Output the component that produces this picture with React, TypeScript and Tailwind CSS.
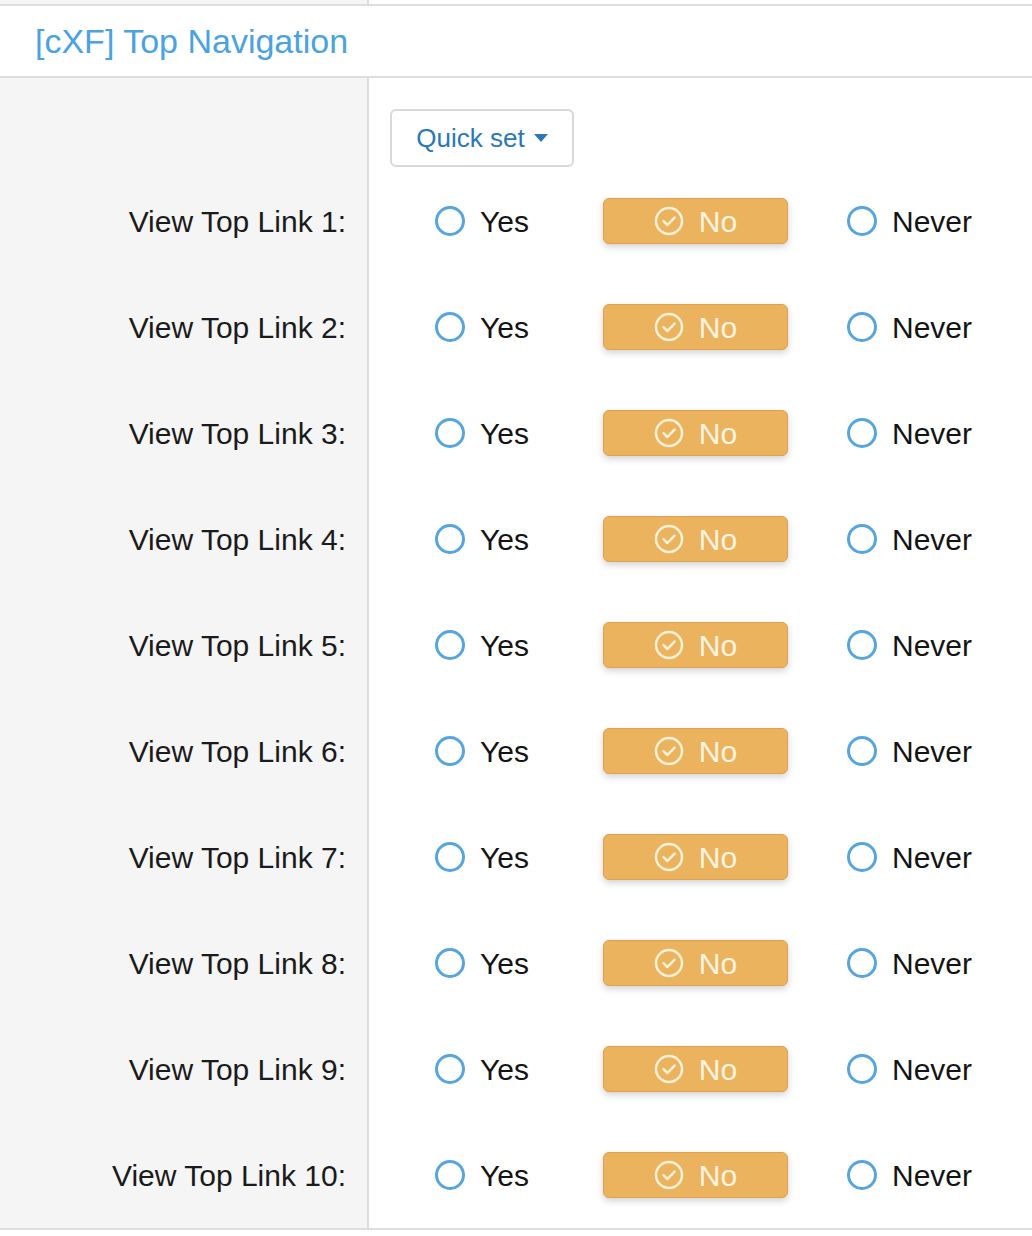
const rows = Array.from({ length: 10 }, (_, i) => `View Top Link ${i + 1}:`);

function Radio() {
	return (
		<span className="box-border block size-[30px] shrink-0 rounded-full border-[3px] border-[#56a5dd] bg-white" />
	);
}

function CheckCircle() {
	return (
		<svg width="30" height="30" viewBox="0 0 30 30" fill="none" className="shrink-0">
			<circle cx="15" cy="15" r="13" stroke="#fdf1d8" strokeWidth="2.5" />
			<path
				d="M9.5 15.2 L13.4 19 L20.6 11.6"
				stroke="#fdf1d8"
				strokeWidth="2.5"
				strokeLinecap="round"
				strokeLinejoin="round"
			/>
		</svg>
	);
}

function OptionRow({ label }: { label: string }) {
	return (
		<div className="flex h-[106px]">
			<div className="flex w-[367px] shrink-0 items-center justify-end bg-[#f5f5f5] pr-[21px] text-[30px] text-[#1b1b1b]">
				{label}
			</div>
			<div className="w-[2px] shrink-0 bg-[#dddddd]" />
			<div className="flex flex-1 items-center pl-[66px] text-[30px] text-[#141414]">
				<label className="flex w-[168px] items-center gap-[15px]">
					<Radio />
					<span>Yes</span>
				</label>
				<div className="flex h-[46px] w-[185px] items-center justify-center gap-[15px] rounded-[6px] border border-[#e1a04b] bg-[#ecb35e] text-[#fff5e2] shadow-[0_3px_7px_rgba(0,0,0,0.18)]">
					<CheckCircle />
					<span>No</span>
				</div>
				<label className="ml-[59px] flex items-center gap-[15px]">
					<Radio />
					<span>Never</span>
				</label>
			</div>
		</div>
	);
}

export default function App() {
	return (
		<div className="w-[1032px] bg-white font-['Liberation_Sans',Arial,sans-serif]">
			<div className="flex h-[4px]">
				<div className="w-[367px] bg-[#f5f5f5]" />
				<div className="w-[2px] bg-[#dddddd]" />
			</div>
			<div className="h-[2px] bg-[#dddddd]" />
			<div className="flex h-[70px] items-center pl-[35px] text-[34px] text-[#4aa3df]">
				[cXF] Top Navigation
			</div>
			<div className="h-[2px] bg-[#dddddd]" />
			<div className="flex h-[90px]">
				<div className="w-[367px] shrink-0 bg-[#f5f5f5]" />
				<div className="w-[2px] shrink-0 bg-[#dddddd]" />
				<div className="flex-1 pl-[21px] pt-[31px]">
					<button className="flex h-[58px] w-[184px] items-center justify-center gap-[9px] rounded-[6px] border-2 border-[#d9d9d9] bg-white text-[26px] text-[#2a78b4]">
						<span>Quick set</span>
						<svg width="14" height="8" viewBox="0 0 14 8">
							<path d="M0 0 H14 L7 8 Z" fill="#2a78b4" />
						</svg>
					</button>
				</div>
			</div>
			{rows.map((r) => (
				<OptionRow key={r} label={r} />
			))}
			<div className="h-[2px] bg-[#dddddd]" />
			<div className="h-[6px]" />
		</div>
	);
}
